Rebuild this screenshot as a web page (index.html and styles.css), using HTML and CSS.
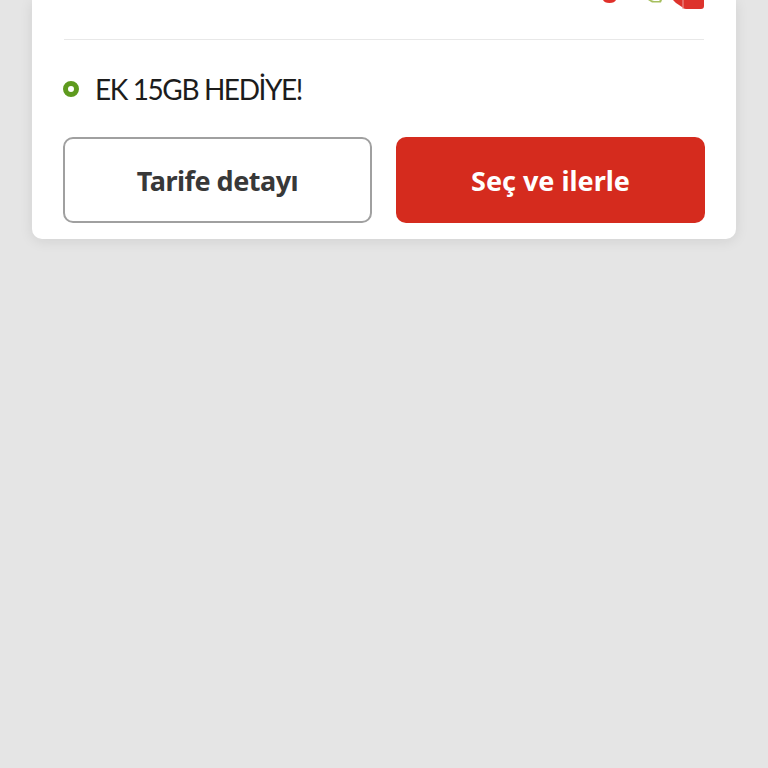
FILE: index.html
```html
<!DOCTYPE html>
<html lang="tr">
<head>
<meta charset="UTF-8">
<meta name="viewport" content="width=device-width, initial-scale=1">
<title>Tarife</title>
<link rel="stylesheet" href="styles.css">
</head>
<body>
<div class="tarife-card">
    <div class="icon-row">
        <svg class="icon-dot" width="13" height="3" viewBox="0 0 13 3"><path d="M0 0h13c-1 2-3 3-6.500 3S1 2 0 0z" fill="#e0302a"/></svg>
        <svg class="icon-leaf" width="14" height="4" viewBox="0 0 14 4"><path d="M0 0l4 2.500h9l1-2.500-2 0-1 1H6L3 0z" fill="#a6bf5e"/></svg>
        <svg class="icon-gift" width="31" height="9" viewBox="0 0 31 9"><path d="M0 0h31v6c0 2-1 3-3 3H13c-2 0-3-1-4-2L6 5 3 3z" fill="#dd332c"/><path d="M10 0v9" stroke="#f0a09a" stroke-width="1"/></svg>
    </div>
    <div class="bonus-row">
        <span class="bonus-dot"></span>
        <span class="bonus-text">EK 15GB HEDİYE!</span>
    </div>
    <div class="button-row">
        <button class="btn btn-detail" type="button">Tarife detayı</button>
        <button class="btn btn-select" type="button">Seç ve ilerle</button>
    </div>
</div>
</body>
</html>
```

FILE: styles.css
```css
html, body {
    height: 100%;
}
body {
    margin: 0;
    overflow: hidden;
    background-color: #e5e5e5;
    font-family: "Noto Sans", Arial, sans-serif;
}
.tarife-card {
    box-sizing: border-box;
    width: 704px;
    height: 239px;
    margin-left: 32px;
    padding: 0 31px 16px;
    background-color: #fff;
    border-radius: 0 0 10px 10px;
    box-shadow: 0 2px 14px rgba(0, 0, 0, 0.09);
}
.icon-row {
    display: flex;
    justify-content: flex-end;
    align-items: flex-start;
    height: 39px;
    margin: 0 1px;
    border-bottom: 1px solid #e8e8e8;
}
.icon-dot {
    margin-right: 32px;
}
.icon-leaf {
    margin-right: 11px;
}
.bonus-row {
    display: flex;
    align-items: center;
    height: 97px;
    padding-top: 1px;
    box-sizing: border-box;
}
.bonus-dot {
    box-sizing: border-box;
    width: 16px;
    height: 16px;
    margin-right: 16px;
    border: 5px solid #5e9a1e;
    border-radius: 50%;
}
.bonus-text {
    font-family: "Lato", Arial, sans-serif;
    font-size: 28px;
    letter-spacing: -1.4px;
    color: #1c1c1c;
}
.button-row {
    display: grid;
    grid-template-columns: 1fr 1fr;
    gap: 24px;
}
.btn {
    height: 86px;
    border-radius: 10px;
    font-family: "Noto Sans", Arial, sans-serif;
    font-size: 27px;
    font-weight: 700;
}
.btn-detail {
    background-color: #fff;
    border: 2px solid #a0a0a0;
    color: #383838;
    letter-spacing: -0.5px;
}
.btn-select {
    background-color: #d52b1e;
    border: none;
    color: #fff;
}
```
